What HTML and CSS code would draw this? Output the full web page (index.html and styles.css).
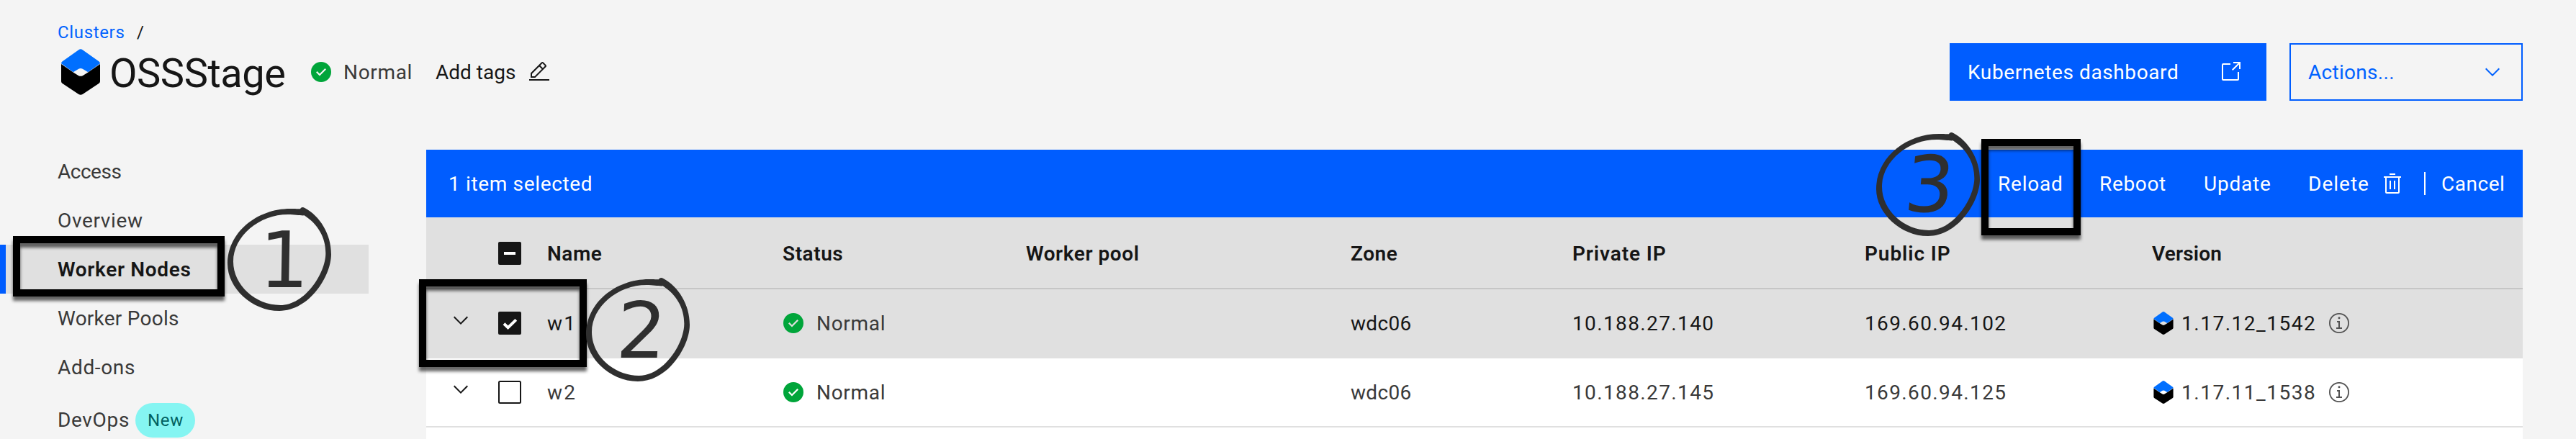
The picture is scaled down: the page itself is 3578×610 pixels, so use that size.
FILE: index.html
```html
<!DOCTYPE html>
<html lang="en">
<head>
<meta charset="utf-8">
<title>OSSStage - Worker Nodes</title>
<link rel="stylesheet" href="styles.css">
</head>
<body>
<svg class="defs" width="0" height="0">
  <symbol id="logo" viewBox="0 0 54.4 64">
    <path fill="#006fff" d="M24.5 .9Q27.2-.8 29.9 .9L53 17.3Q54.4 18.4 54.4 20.2L37.6 32.2L30 27.6Q27.2 26.2 24.4 27.6L16.8 32.2L0 20.2Q0 18.4 1.4 17.3Z"/>
    <path fill="#000" d="M0 20.8L16.8 32.4L24.4 37.2Q27.2 38.6 30 37.2L37.6 32.4L54.4 20.8V45.2Q54.4 46.8 53 47.8L29.9 63.2Q27.2 64.8 24.5 63.2L1.4 47.8Q0 46.8 0 45.2Z"/>
  </symbol>
  <symbol id="ok" viewBox="1 1 14 14">
    <path fill="#00a53a" fill-rule="evenodd" d="M8 1a7 7 0 1 0 0 14a7 7 0 1 0 0-14zM7 10.8L4.5 8.3l.8-.8L7 9.2l3.7-3.7.8.8z"/>
  </symbol>
  <symbol id="chev" viewBox="0 0 16 16"><path fill="currentColor" d="M8 11L3 6l.7-.7L8 9.6l4.3-4.3.7.7z"/></symbol>
  <symbol id="info" viewBox="1 1 14 14">
    <path fill="currentColor" fill-rule="evenodd" d="M8 1a7 7 0 1 0 0 14a7 7 0 1 0 0-14zM8 1.9a6.1 6.1 0 1 1 0 12.2a6.1 6.1 0 1 1 0-12.2z"/>
    <path fill="currentColor" d="M8.5 11V6.5h-2v1h1V11H6v1h4v-1zM8 3.6a.75.75 0 1 0 0 1.5a.75.75 0 1 0 0-1.5z"/>
  </symbol>
  <symbol id="ring" viewBox="0 0 540 540">
    <path fill="#2f2f2f" fill-rule="evenodd" d="M370 57C432 90 480 165 480 250C480 340 390 486 264 486C150 486 48 390 48 290C48 160 170 60 310 60C330 60 345 61 351 61C355 53 362 52 370 57ZM368 88C425 125 457 180 457 245C457 330 370 462 268 462C165 462 72 380 72 280C72 175 180 84 300 84C330 84 350 89 368 88Z"/>
  </symbol>
</svg>

<header class="header">
  <nav class="crumbs"><a class="crumb-link">Clusters</a><span class="slash">/</span></nav>
  <div class="title-row">
    <svg class="logo-lg"><use href="#logo"/></svg>
    <h1 class="title">OSSStage</h1>
    <svg class="ok"><use href="#ok"/></svg>
    <span class="state">Normal</span>
    <span class="add-tags">Add tags</span>
    <svg class="icon32" viewBox="0 0 32 32"><path fill="#161616" d="M2 26h28v2H2zM25.4 9c.8-.8.8-2 0-2.8l-3.6-3.6c-.8-.8-2-.8-2.8 0l-15 15V24h6.4l15-15zm-5-5L24 7.6l-3 3L17.4 7l3-3zM6 22v-3.6l10-10 3.6 3.6-10 10H6z"/></svg>
    <button class="btn primary"><span>Kubernetes dashboard</span>
      <svg class="icon32" viewBox="0 0 32 32"><path fill="#fff" d="M26 28H6a2 2 0 0 1-2-2V6a2 2 0 0 1 2-2h10v2H6v20h20V16h2v10a2 2 0 0 1-2 2zM20 2v2h6.6L18 12.6l1.4 1.4L28 5.4V12h2V2z"/></svg>
    </button>
    <button class="btn outline"><span class="actions-label">Actions...</span><svg class="icon32"><use href="#chev"/></svg></button>
  </div>
</header>

<div class="layout">
  <nav class="side">
    <a class="item access">Access</a>
    <a class="item">Overview</a>
    <a class="item active">Worker Nodes</a>
    <a class="item pools">Worker Pools</a>
    <a class="item">Add-ons</a>
    <a class="item devops">DevOps<span class="badge">New</span></a>
  </nav>

  <main class="main">
    <div class="batch">
      <span class="selected">1 item selected</span>
      <div class="batch-actions">
        <span class="a-reload">Reload</span>
        <span class="a-reboot">Reboot</span>
        <span class="a-update">Update</span>
        <span class="a-delete">Delete</span>
        <svg class="icon32" viewBox="0 0 32 32"><path fill="#fff" fill-rule="evenodd" d="M12 12h2v12h-2zM18 12h2v12h-2zM4 6v2h2v20a2 2 0 0 0 2 2h16a2 2 0 0 0 2-2V8h2V6zM8 28V8h16v20zM12 2h8v2h-8z"/></svg>
        <i class="divider"></i>
        <span class="a-cancel">Cancel</span>
      </div>
    </div>

    <div class="row head">
      <span></span>
      <svg class="check" viewBox="0 0 32 32"><rect width="32" height="32" rx="2" fill="#161616"/><rect x="8" y="14" width="16" height="4" fill="#fff"/></svg>
      <span class="cell">Name</span>
      <span class="cell">Status</span>
      <span class="cell">Worker pool</span>
      <span class="cell">Zone</span>
      <span class="cell wide">Private IP</span>
      <span class="cell wide">Public IP</span>
      <span class="cell tight">Version</span>
    </div>

    <div class="row picked">
      <svg class="expand"><use href="#chev"/></svg>
      <svg class="check" viewBox="0 0 32 32"><rect width="32" height="32" rx="2" fill="#161616"/><path d="M8 16.8L13.6 22.2L24.8 11.4" fill="none" stroke="#fff" stroke-width="4"/></svg>
      <span class="cell node">w1</span>
      <span class="status"><svg class="ok"><use href="#ok"/></svg><span class="cell grey">Normal</span></span>
      <span></span>
      <span class="cell zone">wdc06</span>
      <span class="cell num">10.188.27.140</span>
      <span class="cell num">169.60.94.102</span>
      <span class="version"><svg class="logo-sm"><use href="#logo"/></svg><span class="cell num">1.17.12_1542</span><svg class="info"><use href="#info"/></svg></span>
    </div>

    <div class="row">
      <svg class="expand"><use href="#chev"/></svg>
      <svg class="check" viewBox="0 0 32 32"><rect x="1" y="1" width="30" height="30" rx="1.5" fill="none" stroke="#161616" stroke-width="2"/></svg>
      <span class="cell node">w2</span>
      <span class="status"><svg class="ok"><use href="#ok"/></svg><span class="cell grey">Normal</span></span>
      <span></span>
      <span class="cell zone">wdc06</span>
      <span class="cell num">10.188.27.145</span>
      <span class="cell num">169.60.94.125</span>
      <span class="version"><svg class="logo-sm"><use href="#logo"/></svg><span class="cell num">1.17.11_1538</span><svg class="info"><use href="#info"/></svg></span>
    </div>
    <div class="rest"></div>
  </main>
</div>

<div class="frame frame-1"></div>
<div class="frame frame-2"></div>
<div class="frame frame-3"></div>
<svg class="mark mark-1" viewBox="0 0 180 180"><use href="#ring" width="180" height="180"/><text transform="translate(94 129) skewX(-1)">1</text></svg>
<svg class="mark mark-2" viewBox="0 0 180 180"><use href="#ring" width="180" height="180"/><text transform="translate(91 129) skewX(-3)">2</text></svg>
<svg class="mark mark-3" viewBox="0 0 180 180"><use href="#ring" width="180" height="180"/><text transform="translate(87 128) skewX(-5)">3</text></svg>
</body>
</html>
```
FILE: styles.css
```css
* { box-sizing: border-box; }
html, body { height: 610px; overflow: hidden; }
body {
  position: relative;
  margin: 0;
  background: #f4f4f4;
  color: #161616;
  font: 400 28px/40px Roboto, "Noto Sans", sans-serif;
  letter-spacing: .66px;
  white-space: nowrap;
}
svg { display: block; flex: none; }
.defs { position: absolute; }
.icon32 { width: 32px; height: 32px; }
.ok { width: 28px; height: 28px; }

/* Page header */
.header { height: 204px; padding: 29px 74px 0 80px; }
.crumbs { display: flex; height: 31px; font-size: 24px; line-height: 32px; }
.crumb-link { width: 110px; color: #0062ff; }
.title-row { display: flex; align-items: center; height: 80px; }
.title-row > span { padding-top: 2px; }
.logo-lg { width: 54px; height: 64px; margin-left: 5px; }
.title {
  width: 280px;
  margin: 0 0 0 13px;
  padding-top: 3px;
  font-size: 56px;
  font-weight: 400;
  line-height: 64px;
  letter-spacing: -.46px;
}
.state { width: 128px; margin-left: 17px; color: #393939; }
.add-tags { width: 128px; letter-spacing: 0; }
.btn {
  display: flex;
  align-items: center;
  justify-content: space-between;
  height: 80px;
  border: 2px solid #005dff;
  font: inherit;
  letter-spacing: .6px;
}
.btn span { padding-top: 2px; }
.primary { width: 440px; margin-left: auto; padding: 0 32px 0 23px; background: #005dff; color: #fff; }
.outline { width: 324px; margin-left: 32px; padding: 0 24px; background: none; color: #0062ff; }
.actions-label { letter-spacing: .3px; }

/* Sidebar */
.layout { display: flex; height: 406px; overflow: hidden; }
.side { width: 592px; }
.item {
  display: flex;
  align-items: center;
  width: 512px;
  height: 68px;
  padding: 2px 0 0 80px;
  color: #393939;
}
.access { letter-spacing: -.5px; }
.pools { letter-spacing: .24px; }
.active {
  padding-left: 72px;
  border-left: 8px solid #005dff;
  background: #e0e0e0;
  color: #161616;
  font-weight: 600;
}
.devops { height: 80px; padding-top: 0; }
.badge {
  width: 83px;
  height: 48px;
  margin-left: 8px;
  padding-left: 17px;
  border-radius: 24px;
  background: #85f5f2;
  color: #006161;
  font-size: 24px;
  line-height: 49px;
}

/* Batch action bar */
.main { width: 2912px; padding-top: 4px; }
.batch {
  display: flex;
  align-items: center;
  justify-content: space-between;
  height: 94px;
  padding-left: 31px;
  background: #005dff;
  color: #fff;
}
.batch span { padding-top: 2px; }
.batch-actions { display: flex; align-items: center; }
.a-reload { width: 141px; letter-spacing: .78px; }
.a-reboot { width: 145px; }
.a-update { width: 145px; letter-spacing: .79px; }
.a-delete { width: 101px; letter-spacing: 1px; }
.divider { width: 2px; height: 32px; margin-left: 28px; background: #fff; }
.a-cancel { width: 135px; padding-left: 22px; letter-spacing: .52px; }

/* Worker table */
.row {
  display: grid;
  grid-template-columns: 100px 67px 327px 338px 451px 308px 406px 400px 1fr;
  align-items: center;
  height: 96px;
  border-bottom: 2px solid #e0e0e0;
  background: #fff;
  color: #393939;
}
.picked { background: #e0e0e0; color: #161616; }
.head {
  height: 100px;
  border-color: #c6c6c6;
  background: #e0e0e0;
  color: #161616;
  font-weight: 600;
}
.cell { padding-top: 2px; letter-spacing: .55px; }
.head .cell { padding: 4px 0 0 1px; }
.head .wide { letter-spacing: .9px; }
.head .tight { padding-left: 0; letter-spacing: .15px; }
.head .check { margin-top: 2px; }
.check { width: 32px; height: 32px; }
.expand { width: 32px; height: 32px; margin: 0 0 8px 32px; color: #161616; }
.node { padding-left: 1px; letter-spacing: 2.2px; }
.zone { padding-left: 1px; letter-spacing: .32px; }
.num { padding-left: 1px; letter-spacing: 1.38px; }
.status, .version { display: flex; align-items: center; }
.status .ok { margin: 0 18px 0 2px; }
.status .cell { letter-spacing: .7px; }
.grey { color: #393939; }
.logo-sm { width: 28px; height: 32px; margin: 0 10px 0 2px; }
.version .num { width: 206px; letter-spacing: 1.52px; }
.info { width: 28px; height: 28px; color: #525252; }
.rest { height: 16px; background: #fff; }

/* Walkthrough annotations, laid over the page */
.frame {
  position: absolute;
  border: 10px solid #000;
  filter: drop-shadow(0 6px 2px rgba(0, 0, 0, .6));
}
.frame-1 { left: 18px; top: 328px; width: 294px; height: 84px; }
.frame-2 { left: 582px; top: 388px; width: 233px; height: 122px; }
.frame-3 { left: 2752px; top: 193px; width: 138px; height: 134px; }
.mark { position: absolute; width: 180px; height: 180px; }
.mark text {
  fill: #2f2f2f;
  font: 108px "DejaVu Sans", sans-serif;
  letter-spacing: 0;
  text-anchor: middle;
}
.mark-1 { left: 300px; top: 270px; }
.mark-2 { left: 798px; top: 368px; }
.mark-3 { left: 2590px; top: 166px; }
```
